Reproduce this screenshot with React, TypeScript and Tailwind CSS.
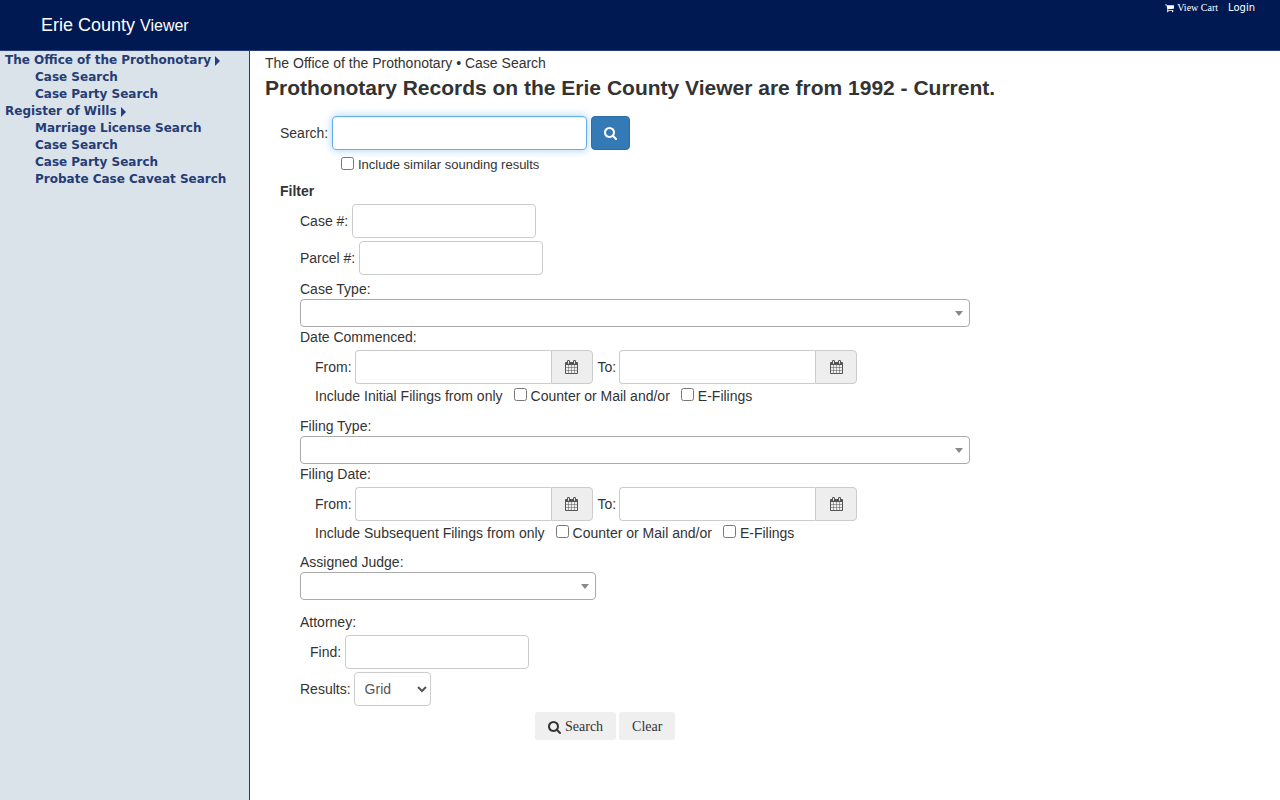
import type { ReactNode } from "react";

const icons = {
    search: "M1216 832q0-185-131.5-316.5t-316.5-131.5-316.5 131.5-131.5 316.5 131.5 316.5 316.5 131.5 316.5-131.5 131.5-316.5zm512 832q0 52-38 90t-90 38q-54 0-90-38l-343-342q-179 124-399 124-143 0-273.5-55.5t-225-150-150-225-55.5-273.5 55.5-273.5 150-225 225-150 273.5-55.5 273.5 55.5 225 150 150 225 55.5 273.5q0 220-124 399l343 343q37 37 37 90z",
    calendar: "M192 1664h288v-288h-288v288zm352 0h320v-288h-320v288zm-352-352h288v-320h-288v320zm352 0h320v-320h-320v320zm-352-384h288v-288h-288v288zm736 736h320v-288h-320v288zm-384-736h320v-288h-320v288zm768 736h288v-288h-288v288zm-384-352h320v-320h-320v320zm-352-864v-288q0-13-9.5-22.5t-22.5-9.5h-64q-13 0-22.5 9.5t-9.5 22.5v288q0 13 9.5 22.5t22.5 9.5h64q13 0 22.5-9.5t9.5-22.5zm736 864h288v-320h-288v320zm-384-384h320v-288h-320v288zm384 0h288v-288h-288v288zm32-480v-288q0-13-9.5-22.5t-22.5-9.5h-64q-13 0-22.5 9.5t-9.5 22.5v288q0 13 9.5 22.5t22.5 9.5h64q13 0 22.5-9.5t9.5-22.5zm384-64v1280q0 52-38 90t-90 38h-1408q-52 0-90-38t-38-90v-1280q0-52 38-90t90-38h128v-96q0-66 47-113t113-47h64q66 0 113 47t47 113v96h384v-96q0-66 47-113t113-47h64q66 0 113 47t47 113v96h128q52 0 90 38t38 90z",
    cart: "M704 1536q0 52-38 90t-90 38-90-38-38-90 38-90 90-38 90 38 38 90zm896 0q0 52-38 90t-90 38-90-38-38-90 38-90 90-38 90 38 38 90zm128-1088v512q0 24-16.5 42.5t-40.5 21.5l-1044 122q13 60 13 70 0 16-24 64h920q26 0 45 19t19 45-19 45-45 19h-1024q-26 0-45-19t-19-45q0-11 8-31.5t16-36 21.5-40 15.5-29.5l-177-823h-204q-26 0-45-19t-19-45 19-45 45-19h256q16 0 28.5 6.5t19.5 15.5 13 24.5 8 26 5.5 29.5 4.5 26h1201q26 0 45 19t19 45z",
};

const inputClass = "h-[34px] rounded border border-[#ccc] bg-white px-3 text-[#555] outline-none";

function Icon({ name, className }: { name: keyof typeof icons; className: string }) {
    return (
        <svg viewBox="64 0 1664 1792" fill="currentColor" aria-hidden="true" className={className}>
            <path d={icons[name]} />
        </svg>
    );
}

function TextField({ id, label }: { id: string; label: string }) {
    return (
        <div className="flex items-center gap-1">
            <label htmlFor={id}>{label}</label>
            <input id={id} type="text" className={`${inputClass} w-46`} />
        </div>
    );
}

function DateField({ id, label }: { id: string; label: string }) {
    return (
        <div className="flex items-center gap-[3px]">
            <label htmlFor={id}>{label}</label>
            <div className="flex">
                <input id={id} type="text" className={`${inputClass} w-49 rounded-r-none border-r-0`} />
                <button
                    type="button"
                    aria-label="Pick a date"
                    className="flex h-[34px] w-[42px] items-center justify-center rounded-r border border-[#ccc] bg-[#eee] text-[#555]"
                >
                    <Icon name="calendar" className="h-[14px] w-[13px]" />
                </button>
            </div>
        </div>
    );
}

function DropDown({ id, label, narrow = false }: { id: string; label: string; narrow?: boolean }) {
    return (
        <div>
            <label htmlFor={id} className="block">{label}</label>
            <div className={`relative ${narrow ? "w-[296px]" : "max-w-[670px]"}`}>
                <select id={id} className="block h-7 w-full appearance-none rounded border border-[#aaa] bg-white px-2 outline-none">
                    <option value=""></option>
                </select>
                <span className="pointer-events-none absolute top-3 right-[7px] border-x-4 border-t-5 border-x-transparent border-t-[#888]" />
            </div>
        </div>
    );
}

function CheckBox({ id, children }: { id: string; children: ReactNode }) {
    return (
        <div className="flex items-center gap-1">
            <input id={id} type="checkbox" className="mb-1 size-[13px]" />
            <label htmlFor={id}>{children}</label>
        </div>
    );
}

function FilingDates({ id, title, source }: { id: string; title: string; source: string }) {
    return (
        <fieldset>
            <legend>{title}</legend>
            <div className="pl-[15px]">
                <div className="flex gap-[5px] pt-[3px]">
                    <DateField id={`${id}-from`} label="From:" />
                    <DateField id={`${id}-to`} label="To:" />
                </div>
                <div className="mt-[2px] flex gap-[11px]">
                    <span>{source}</span>
                    <CheckBox id={`${id}-counter`}>Counter or Mail and/or</CheckBox>
                    <CheckBox id={`${id}-efilings`}>E-Filings</CheckBox>
                </div>
            </div>
        </fieldset>
    );
}

const menu = [
    { title: "The Office of the Prothonotary", links: ["Case Search", "Case Party Search"] },
    {
        title: "Register of Wills",
        links: ["Marriage License Search", "Case Search", "Case Party Search", "Probate Case Caveat Search"],
    },
];

export default function App() {
    return (
        <div className="flex min-h-screen flex-col bg-white font-['Liberation_Sans',Arial,sans-serif] text-sm leading-5 text-[#333]">
            <header className="flex h-[51px] items-start justify-between border-b border-[#263c74] bg-[#001952] pr-[25px] pl-[41px] text-white">
                <div className="pt-[13px] text-lg leading-6">
                    Erie County <span className="text-base leading-6">Viewer</span>
                </div>
                <nav className="flex gap-[10px] pt-[2px] text-[10px] leading-3">
                    <a href="#cart" className="flex items-center gap-[3px] font-['Liberation_Serif',serif]">
                        <Icon name="cart" className="h-[10px] w-[9px]" />
                        View Cart
                    </a>
                    <a href="#login" className="font-['DejaVu_Sans',Verdana,sans-serif]">Login</a>
                </nav>
            </header>

            <div className="flex flex-1">
                <aside className="w-[250px] shrink-0 border-r border-[#263c74] bg-[#dae3ea] pt-px pl-[5px] font-['DejaVu_Sans',Verdana,sans-serif] text-xs leading-[17px] font-bold text-[#263c74]">
                    {menu.map((group) => (
                        <div key={group.title}>
                            <a href="#office" className="flex items-center gap-1 leading-[17px]">
                                {group.title}
                                <span className="mt-px border-y-5 border-l-5 border-y-transparent border-l-[#263c8a]" />
                            </a>
                            <ul className="pl-[30px] leading-[17px]">
                                {group.links.map((link) => (
                                    <li key={link}>
                                        <a href="#search">{link}</a>
                                    </li>
                                ))}
                            </ul>
                        </div>
                    ))}
                </aside>

                <main className="min-w-0 flex-1 px-[15px] pt-[2px]">
                    <p>The Office of the Prothonotary • Case Search</p>
                    <h1 className="mt-[3px] text-[21px] leading-6 font-bold">
                        Prothonotary Records on the Erie County Viewer are from 1992 - Current.
                    </h1>

                    <form className="mt-4 pl-[15px]">
                        <div className="flex items-center gap-1">
                            <label htmlFor="search">Search:</label>
                            <input
                                id="search"
                                type="text"
                                className="h-[34px] w-[255px] rounded border border-[#66afe9] px-3 shadow-[inset_0_1px_1px_rgba(0,0,0,0.075),0_0_8px_rgba(102,175,233,0.6)] outline-none"
                            />
                            <button
                                type="submit"
                                aria-label="Search"
                                className="flex h-[34px] w-[39px] items-center justify-center rounded border border-[#2e6da4] bg-[#337ab7] text-white"
                            >
                                <Icon name="search" className="h-[14px] w-[13px]" />
                            </button>
                        </div>
                        <div className="mt-[5px] pl-[61px] text-[13px] leading-5">
                            <CheckBox id="similar">Include similar sounding results</CheckBox>
                        </div>

                        <h2 className="mt-[6px] font-bold">Filter</h2>
                        <div className="pt-[3px] pl-5">
                            <div className="space-y-[3px]">
                                <TextField id="case-number" label="Case #:" />
                                <TextField id="parcel-number" label="Parcel #:" />
                            </div>

                            <div className="mt-1">
                                <DropDown id="case-type" label="Case Type:" />
                                <FilingDates id="commenced" title="Date Commenced:" source="Include Initial Filings from only" />
                            </div>

                            <div className="mt-[10px]">
                                <DropDown id="filing-type" label="Filing Type:" />
                                <FilingDates id="filed" title="Filing Date:" source="Include Subsequent Filings from only" />
                            </div>

                            <div className="mt-[9px]">
                                <DropDown id="judge" label="Assigned Judge:" narrow />
                            </div>

                            <div className="mt-3">
                                <p>Attorney:</p>
                                <div className="pt-[3px] pl-[10px]">
                                    <TextField id="attorney" label="Find:" />
                                </div>
                            </div>

                            <div className="mt-[3px] flex items-center gap-[3px]">
                                <label htmlFor="results">Results:</label>
                                <select id="results" className="h-[34px] w-[77px] rounded border border-[#ccc] bg-white px-[6px] text-[#555]">
                                    <option>Grid</option>
                                    <option>List</option>
                                </select>
                            </div>
                        </div>

                        <div className="mt-[6px] flex gap-[3px] pl-[255px] font-['Liberation_Serif',serif]">
                            <button type="submit" className="flex h-7 items-center gap-1 rounded-[3px] bg-[#efefef] px-[13px] pt-px">
                                <Icon name="search" className="h-[14px] w-[13px]" />
                                Search
                            </button>
                            <button type="reset" className="h-7 rounded-[3px] bg-[#efefef] px-[13px] pt-px">Clear</button>
                        </div>
                    </form>
                </main>
            </div>
        </div>
    );
}
